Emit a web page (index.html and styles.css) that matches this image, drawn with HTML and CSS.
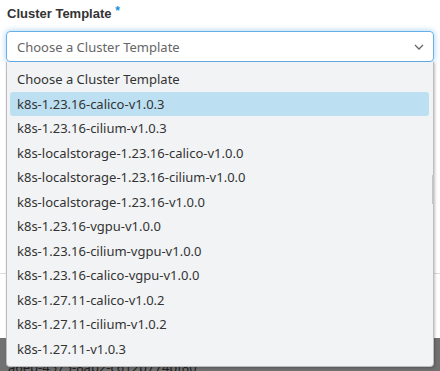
FILE: index.html
```html
<!DOCTYPE html>
<html lang="en">
<head>
  <meta charset="UTF-8">
  <title>Cluster Template</title>
  <link rel="stylesheet" href="styles.css">
</head>
<body>
  <div class="form">
    <label class="label">Cluster Template <span class="req">*</span></label>
    <div class="select-wrap">
      <div class="select">
        <span class="placeholder">Choose a Cluster Template</span>
        <svg class="chevron" width="10" height="6" viewBox="0 0 10 6"><path d="M1 1l4 4 4-4" fill="none" stroke="#666" stroke-width="1.3"/></svg>
      </div>
      <ul class="dropdown">
        <li>Choose a Cluster Template</li>
        <li class="active">k8s-1.23.16-calico-v1.0.3</li>
        <li>k8s-1.23.16-cilium-v1.0.3</li>
        <li>k8s-localstorage-1.23.16-calico-v1.0.0</li>
        <li>k8s-localstorage-1.23.16-cilium-v1.0.0</li>
        <li>k8s-localstorage-1.23.16-v1.0.0</li>
        <li>k8s-1.23.16-vgpu-v1.0.0</li>
        <li>k8s-1.23.16-cilium-vgpu-v1.0.0</li>
        <li>k8s-1.23.16-calico-vgpu-v1.0.0</li>
        <li>k8s-1.27.11-calico-v1.0.2</li>
        <li>k8s-1.27.11-cilium-v1.0.2</li>
        <li>k8s-1.27.11-v1.0.3</li>
        <span class="thumb"></span>
      </ul>
    </div>
    <div class="under"></div>
    <hr class="rule">
  </div>
  <div class="footer">
    <div>cluster id</div>
    <div>a6eb-4575-8ab2-c612b774bf80</div>
  </div>
</body>
</html>
```

FILE: styles.css
```css
html, body {
  min-height: 100%;
}
body {
  margin: 0;
  background: #fff;
  font-family: 'Noto Sans', sans-serif;
  color: #333;
}
.form {
  padding: 5px 6px 0;
}
.label {
  display: block;
  font-family: 'Liberation Sans', Arial, sans-serif;
  font-weight: bold;
  font-size: 13px;
  line-height: 18px;
  height: 18px;
  color: #333;
  padding-left: 1px;
}
.req {
  color: #1a8fdc;
  font-size: 12px;
  position: relative;
  top: -3px;
}
.select-wrap {
  position: relative;
  margin-top: 8px;
}
.select {
  height: 29px;
  border: 1px solid #66afe9;
  border-radius: 4px;
  box-shadow: 0 0 6px rgba(102, 175, 233, 0.6);
  display: flex;
  align-items: center;
  justify-content: space-between;
  padding: 0 9px 0 10px;
  font-size: 13px;
  color: #666;
}
.chevron {
  display: block;
}
.dropdown {
  position: absolute;
  top: 31px;
  left: 0;
  width: 426px;
  margin: 0;
  padding: 5px 0;
  list-style: none;
  background: #f2f3f5;
  border: 1px solid #bdbdbd;
  border-top: none;
  border-radius: 0 0 4px 4px;
  box-shadow: 1px 1px 3px rgba(0, 0, 0, 0.25);
  z-index: 2;
}
.dropdown li {
  height: 24.5px;
  line-height: 24.5px;
  margin: 0 4px 0 3px;
  padding-left: 7px;
  font-size: 13px;
  color: #333;
  border-radius: 3px;
}
.dropdown li.active {
  background: #bcdff2;
}
.thumb {
  position: absolute;
  right: -1px;
  top: 113px;
  width: 2px;
  height: 29px;
  background: #c4c4c4;
}
.under {
  height: 211px;
}
.rule {
  border: none;
  border-top: 1px solid #ddd;
  margin: 0 -6px;
}
.footer {
  margin-top: 64px;
  background: #717171;
  color: #222;
  font-size: 13px;
  line-height: 14px;
  padding: 8px 8px 0;
  height: 40px;
}
```
